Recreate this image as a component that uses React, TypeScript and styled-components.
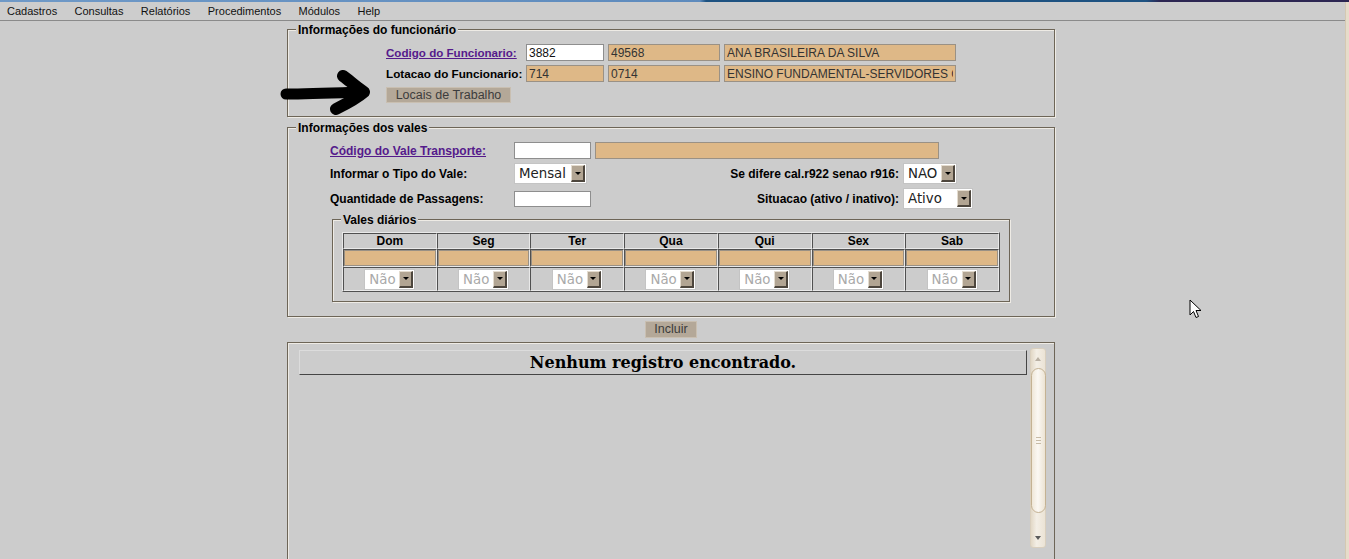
import React from 'react';
import styled, { createGlobalStyle } from 'styled-components';

const GlobalStyle = createGlobalStyle`
  html, body { margin: 0; padding: 0; background: #cccccc; overflow: hidden; }
  body { font-family: "Liberation Sans", Arial, sans-serif; font-size: 12px; color: #000; }
  #root { width: 1349px; height: 559px; overflow: hidden; }
  * { box-sizing: border-box; }
`;

const Screen = styled.div`
  position: relative;
  width: 1349px;
  height: 559px;
  display: flex;
  flex-direction: column;
  overflow: hidden;
  background: #cccccc;
`;

const TopStrip = styled.div`
  height: 2px;
  flex: none;
  background: linear-gradient(90deg, #6f99c7 0px, #5e8bbd 700px, #1d5281 706px, #1d5281 1146px, #2c2652 1160px, #2c2652 100%);
`;

const Body = styled.div`
  flex: 1;
  display: flex;
  min-height: 0;
`;

const Main = styled.div`
  flex: 1;
  display: flex;
  flex-direction: column;
  min-width: 0;
`;

const RightEdge = styled.div`
  width: 4px;
  flex: none;
  background: #e6dcca;
  border-left: 1px solid #d4c8b2;
`;

const MenuBar = styled.nav`
  height: 19px;
  flex: none;
  display: flex;
  align-items: center;
  gap: 17.4px;
  padding-left: 7px;
  border-bottom: 1px solid #8a8a8a;
  background: #cdcdcd;
  font-size: 11px;
  color: #111;
`;

const MenuItem = styled.span`
  cursor: default;
`;

const Content = styled.div`
  margin-left: 287px;
  width: 768px;
  padding-top: 0px;
  display: flex;
  flex-direction: column;
`;

const Fieldset = styled.fieldset<{ $pt: number; $pb: number; $mt?: number }>`
  margin: ${p => p.$mt ?? 0}px 0 0 0;
  padding: ${p => p.$pt}px 8px ${p => p.$pb}px 8px;
  border: 1px solid #6d6557;
  box-shadow: inset 1px 1px 0 #eeebe5, 1px 1px 0 #eeebe5;
  min-inline-size: auto;
`;

const InnerFieldset = styled(Fieldset)`
  margin-left: 36px;
  width: 678px;
`;

const Legend = styled.legend`
  padding: 2px 2px 0 2px;
  font-weight: bold;
  font-size: 12px;
  line-height: 14px;
  background: #cccccc;
  color: #000;
`;

const EmpGrid = styled.div`
  margin-left: 90px;
  display: grid;
  grid-template-columns: 136px 78px 112px 232px;
  grid-template-rows: 17px 17px;
  column-gap: 4px;
  row-gap: 4px;
  align-items: center;
`;

const LinkLabel = styled.a<{ $fs?: number }>`
  font-weight: bold;
  font-size: ${p => p.$fs ?? 12}px;
  color: #551a8b;
  text-decoration: underline;
  white-space: nowrap;
  cursor: pointer;
`;

const Label = styled.span<{ $right?: boolean; $fs?: number }>`
  font-weight: bold;
  font-size: ${p => p.$fs ?? 12}px;
  white-space: nowrap;
  text-align: ${p => (p.$right ? 'right' : 'left')};
`;

const TextInput = styled.input<{ $w?: number; $tan?: boolean; $h?: number }>`
  width: ${p => (p.$w ? `${p.$w}px` : '100%')};
  height: ${p => p.$h ?? 17}px;
  margin: 0;
  padding: 0 2px;
  border: 1px solid ${p => (p.$tan ? '#9a9185' : '#8e8e8e')};
  background: ${p => (p.$tan ? '#deb887' : '#ffffff')};
  font-family: "Liberation Sans", Arial, sans-serif;
  font-size: 12px;
  color: ${p => (p.$tan ? '#333' : '#111')};
  outline: none;
  display: block;
`;

const ActionButton = styled.button<{ $w: number; $h: number }>`
  width: ${p => p.$w}px;
  height: ${p => p.$h}px;
  margin: 0;
  padding: 0;
  background: #b4a898;
  border: 1px solid #c9bfb1;
  font-family: "Liberation Sans", Arial, sans-serif;
  font-size: 12.5px;
  color: #3c3c3c;
  line-height: 1;
`;

const ButtonRow = styled.div<{ $center?: boolean; $mt: number; $ml?: number }>`
  display: flex;
  justify-content: ${p => (p.$center ? 'center' : 'flex-start')};
  margin-top: ${p => p.$mt}px;
  margin-left: ${p => p.$ml ?? 0}px;
`;

const ValeGrid = styled.div`
  margin-left: 34px;
  width: 643px;
  display: grid;
  grid-template-columns: 184px 1fr auto 74px;
  grid-template-rows: 17px 21px 21px;
  row-gap: 4px;
  align-items: center;
`;

const InputPair = styled.div`
  grid-column: 2 / -1;
  display: flex;
  gap: 4px;
`;

const SelectCell = styled.div`
  padding-left: 4px;
  display: flex;
`;

const SelectBox = styled.div<{ $w: number; $h: number; $muted?: boolean }>`
  display: inline-flex;
  width: ${p => p.$w}px;
  height: ${p => p.$h}px;
  padding: 1px;
  background: #ffffff;
  border: 1px solid #c4c4c4;
  font-family: "DejaVu Sans", sans-serif;
  font-size: 13.33px;
  color: ${p => (p.$muted ? '#a9a9a9' : '#222')};
`;

const SelectText = styled.span`
  flex: 1;
  display: flex;
  align-items: center;
  padding-left: 3px;
  white-space: nowrap;
  overflow: hidden;
`;

const SelectArrow = styled.span`
  width: 14px;
  flex: none;
  background: #b2a593;
  border-style: solid;
  border-width: 1px 2px 2px 1px;
  border-color: #e4dccf #4d463d #4d463d #e4dccf;
  display: flex;
  align-items: center;
  justify-content: center;
  &::after {
    content: '';
    border-left: 3px solid transparent;
    border-right: 3px solid transparent;
    border-top: 3px solid #000;
  }
`;

const DailyTable = styled.table`
  margin-left: 1px;
  width: 658px;
  border-collapse: separate;
  border-spacing: 0;
  border: 1px solid;
  border-color: #e9e9e9 #505050 #505050 #e9e9e9;
  table-layout: fixed;
`;

const HeadCell = styled.th`
  height: 16px;
  padding: 0;
  border: 1px solid;
  border-color: #505050 #e9e9e9 #e9e9e9 #505050;
  font-size: 12px;
  line-height: 14px;
  font-weight: bold;
  text-align: center;
`;

const Cell = styled.td<{ $h: number }>`
  height: ${p => p.$h}px;
  padding: 0;
  border: 1px solid;
  border-color: #505050 #e9e9e9 #e9e9e9 #505050;
  text-align: center;
  vertical-align: middle;
`;

const CellInner = styled.div`
  display: flex;
  justify-content: center;
`;

const ResultBox = styled.div`
  margin-top: 4px;
  height: 240px;
  flex: none;
  border: 1px solid #6d6557;
  box-shadow: inset 1px 1px 0 #eeebe5;
  padding: 5px 8px 0 11px;
  display: flex;
  gap: 3px;
  align-items: flex-start;
`;

const ResultHeader = styled.div`
  flex: 1;
  margin-top: 2px;
  height: 25px;
  border: 1px solid;
  border-color: #dcdcdc #454545 #454545 #dcdcdc;
  font-family: "DejaVu Serif", serif;
  font-weight: bold;
  font-size: 16px;
  line-height: 23px;
  text-align: center;
  color: #000;
`;

const ScrollTrack = styled.div`
  width: 16px;
  height: 200px;
  flex: none;
  background: linear-gradient(90deg, #e2d8c6, #f3eee5 40%, #ebe3d5);
  border: 1px solid #d9cfbe;
  border-radius: 3px;
  display: flex;
  flex-direction: column;
  align-items: center;
`;

const ScrollArrow = styled.div<{ $down?: boolean }>`
  height: 19px;
  width: 100%;
  flex: none;
  display: flex;
  align-items: center;
  justify-content: center;
  &::after {
    content: '';
    border-left: 3px solid transparent;
    border-right: 3px solid transparent;
    ${p =>
      p.$down
        ? 'border-top: 4px solid #5a5a5a;'
        : 'border-bottom: 4px solid #b9b0a3;'}
  }
`;

const ScrollThumb = styled.div`
  width: 15px;
  height: 145px;
  flex: none;
  border: 1px solid #c4b293;
  border-radius: 8px;
  background: linear-gradient(90deg, #efe7d8, #fbf8f3 45%, #ece3d3);
  display: flex;
  flex-direction: column;
  align-items: center;
  justify-content: center;
  gap: 2px;
`;

const GripLine = styled.span`
  width: 5px;
  height: 1px;
  background: #c7bba6;
`;

const ScrollSpacer = styled.div`
  flex: 1;
`;

const Overlay = styled.svg<{ $x: number; $y: number }>`
  position: absolute;
  left: ${p => p.$x}px;
  top: ${p => p.$y}px;
  pointer-events: none;
`;

type SelProps = { w: number; h: number; text: string; muted?: boolean };
const FakeSelect = ({ w, h, text, muted }: SelProps) => (
  <SelectBox $w={w} $h={h} $muted={muted}>
    <SelectText>{text}</SelectText>
    <SelectArrow />
  </SelectBox>
);

const days = ['Dom', 'Seg', 'Ter', 'Qua', 'Qui', 'Sex', 'Sab'];
const menu = ['Cadastros', 'Consultas', 'Relatórios', 'Procedimentos', 'Módulos', 'Help'];

export default function App() {
  return (
    <Screen>
      <GlobalStyle />
      <TopStrip />
      <Body>
        <Main>
          <MenuBar>
            {menu.map(m => (
              <MenuItem key={m}>{m}</MenuItem>
            ))}
          </MenuBar>
          <Content>
            <Fieldset $pt={7} $pb={13}>
              <Legend>Informações do funcionário</Legend>
              <EmpGrid>
                <LinkLabel $fs={11.6}>Codigo do Funcionario:</LinkLabel>
                <TextInput readOnly value="3882" />
                <TextInput readOnly $tan value="49568" />
                <TextInput readOnly $tan value="ANA BRASILEIRA DA SILVA" />
                <Label $fs={11.7}>Lotacao do Funcionario:</Label>
                <TextInput readOnly $tan value="714" />
                <TextInput readOnly $tan value="0714" />
                <TextInput readOnly $tan value="ENSINO FUNDAMENTAL-SERVIDORES CONTRATADOS" />
              </EmpGrid>
              <ButtonRow $mt={5} $ml={90}>
                <ActionButton $w={125} $h={16}>Locais de Trabalho</ActionButton>
              </ButtonRow>
            </Fieldset>

            <Fieldset $pt={7} $pb={14} $mt={2}>
              <Legend>Informações dos vales</Legend>
              <ValeGrid>
                <LinkLabel>Código do Vale Transporte:</LinkLabel>
                <InputPair>
                  <TextInput readOnly $w={77} value="" />
                  <TextInput readOnly $w={344} $tan value="" />
                </InputPair>

                <Label>Informar o Tipo do Vale:</Label>
                <div>
                  <FakeSelect w={73} h={21} text="Mensal" />
                </div>
                <Label $right>Se difere cal.r922 senao r916:</Label>
                <SelectCell>
                  <FakeSelect w={54} h={21} text="NAO" />
                </SelectCell>

                <Label>Quantidade de Passagens:</Label>
                <div>
                  <TextInput readOnly $w={77} $h={16} value="" />
                </div>
                <Label $right>Situacao (ativo / inativo):</Label>
                <SelectCell>
                  <FakeSelect w={70} h={21} text="Ativo" />
                </SelectCell>
              </ValeGrid>

              <InnerFieldset $pt={5} $pb={9} $mt={2}>
                <Legend>Vales diários</Legend>
                <DailyTable>
                  <thead>
                    <tr>
                      {days.map(d => (
                        <HeadCell key={d}>{d}</HeadCell>
                      ))}
                    </tr>
                  </thead>
                  <tbody>
                    <tr>
                      {days.map(d => (
                        <Cell key={d} $h={18}>
                          <TextInput readOnly $tan $h={16} value="" />
                        </Cell>
                      ))}
                    </tr>
                    <tr>
                      {days.map(d => (
                        <Cell key={d} $h={24}>
                          <CellInner>
                            <FakeSelect w={51} h={21} text="Não" muted />
                          </CellInner>
                        </Cell>
                      ))}
                    </tr>
                  </tbody>
                </DailyTable>
              </InnerFieldset>
            </Fieldset>

            <ButtonRow $center $mt={4}>
              <ActionButton $w={52} $h={17}>Incluir</ActionButton>
            </ButtonRow>

            <ResultBox>
              <ResultHeader>Nenhum registro encontrado.</ResultHeader>
              <ScrollTrack>
                <ScrollArrow />
                <ScrollThumb>
                  <GripLine />
                  <GripLine />
                  <GripLine />
                </ScrollThumb>
                <ScrollSpacer />
                <ScrollArrow $down />
              </ScrollTrack>
            </ResultBox>
          </Content>
        </Main>
        <RightEdge />
      </Body>

      <Overlay $x={278} $y={66} width={95} height={50} viewBox="0 0 95 50">
        <path d="M8 28 C 30 28, 55 27, 82 26" stroke="#000" strokeWidth={11} fill="none" strokeLinecap="round" />
        <path d="M65 10 C 72 15, 78 21, 86 26 C 78 33, 68 38, 58 43" stroke="#000" strokeWidth={12} fill="none" strokeLinecap="round" strokeLinejoin="round" />
      </Overlay>

      <Overlay $x={1189} $y={299} width={14} height={22} viewBox="0 0 14 22">
        <path d="M1 1 L1 16 L4.5 12.5 L7 18.5 L9.5 17.5 L7 11.5 L12 11.5 Z" fill="#fff" stroke="#000" strokeWidth={1} strokeLinejoin="round" />
      </Overlay>
    </Screen>
  );
}
